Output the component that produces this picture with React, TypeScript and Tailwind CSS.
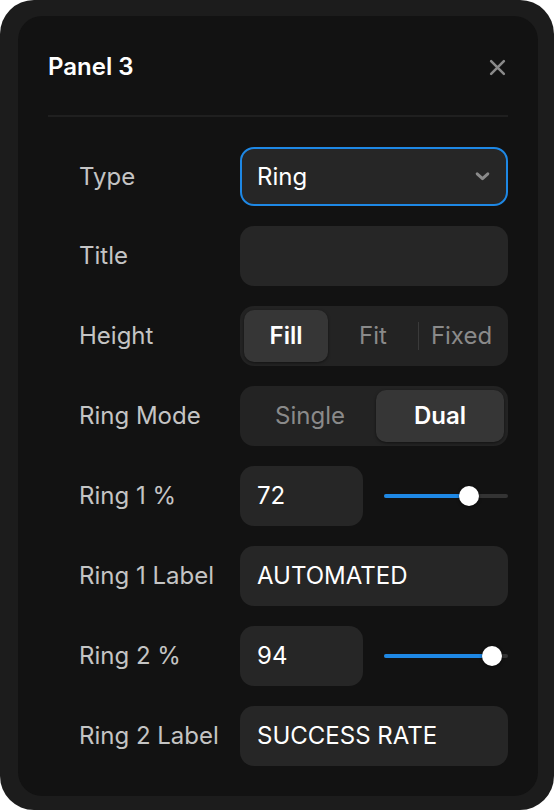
import React, { useState } from 'react';

const font = { fontFamily: 'Inter, "Noto Sans", sans-serif' };

const Label = ({ children }: { children: React.ReactNode }) => (
  <div className="w-[192px] shrink-0 pl-[31px] text-[24px] text-[#c4c4c4]">{children}</div>
);

const Slider = ({ value }: { value: number }) => {
  return (
    <div className="relative ml-[21px] h-5 w-[124px]">
      <div className="absolute left-0 right-0 top-[8px] h-[4px] rounded-full bg-[#333]" />
      <div
        className="absolute left-0 top-[8px] h-[4px] rounded-full bg-[#1e88e5]"
        style={{ width: `${10 + value * 1.04}px` }}
      />
      <div
        className="absolute top-0 h-5 w-5 rounded-full bg-white shadow-[0_1px_3px_rgba(0,0,0,0.6)]"
        style={{ left: `${value * 1.04}px` }}
      />
    </div>
  );
};

const App = () => {
  const [height, setHeight] = useState('Fill');
  const [mode, setMode] = useState('Dual');

  return (
    <div className="w-[554px] h-[810px] bg-white" style={font}>
      <div className="w-full h-full rounded-[34px] bg-[#1c1c1c] pt-[16px] pl-[18px] pr-[16px] pb-[14px]">
        <div className="w-full h-full rounded-[24px] bg-[#121212] px-[30px] pt-[36px]">
          <div className="flex items-center justify-between h-[30px]">
            <h1 className="text-[24px] font-semibold text-white">Panel 3</h1>
            <svg width="17" height="17" viewBox="0 0 16 16" className="mr-[2px]">
              <path d="M2 2L14 14M14 2L2 14" stroke="#8a8a8a" strokeWidth="2.4" strokeLinecap="round" />
            </svg>
          </div>
          <div className="mt-[33px] h-[2px] bg-[#1f1f1f]" />

          <div className="flex flex-col gap-[20px] mt-[30px]">
            <div className="flex items-center">
              <Label>Type</Label>
              <div className="flex-1 h-[59px] rounded-[14px] bg-[#262626] border-2 border-[#1e88e5] flex items-center justify-between pl-[15px] pr-[15px]">
                <span className="text-[24px] text-white">Ring</span>
                <svg width="17" height="11" viewBox="0 0 16 10">
                  <path d="M3 2.5L8 7L13 2.5" stroke="#8a8a8a" strokeWidth="2.8" fill="none" strokeLinecap="round" strokeLinejoin="round" />
                </svg>
              </div>
            </div>

            <div className="flex items-center">
              <Label>Title</Label>
              <div className="flex-1 h-[60px] rounded-[14px] bg-[#262626]" />
            </div>

            <div className="flex items-center">
              <Label>Height</Label>
              <div className="flex-1 h-[60px] rounded-[14px] bg-[#232323] p-[4px] flex items-center">
                {['Fill', 'Fit', 'Fixed'].map((item, i) => (
                  <React.Fragment key={item}>
                    {i === 2 && <div className="w-[1px] h-[28px] bg-[#3a3a3a]" />}
                    <button
                      onClick={() => setHeight(item)}
                      className={`h-full rounded-[10px] text-[24px] ${
                        height === item
                          ? 'bg-[#363636] text-white font-semibold shadow-[0_1px_3px_rgba(0,0,0,0.5)]'
                          : 'text-[#8a8a8a]'
                      } ${i === 0 ? 'w-[84px]' : i === 1 ? 'w-[90px]' : 'flex-1'}`}
                    >
                      {item}
                    </button>
                  </React.Fragment>
                ))}
              </div>
            </div>

            <div className="flex items-center">
              <Label>Ring Mode</Label>
              <div className="flex-1 h-[60px] rounded-[14px] bg-[#232323] p-[4px] flex items-center">
                {['Single', 'Dual'].map((item) => (
                  <button
                    key={item}
                    onClick={() => setMode(item)}
                    className={`h-full rounded-[10px] text-[24px] ${item === 'Single' ? 'w-[132px]' : 'flex-1'} ${
                      mode === item
                        ? 'bg-[#363636] text-white font-semibold shadow-[0_1px_3px_rgba(0,0,0,0.5)]'
                        : 'text-[#8a8a8a]'
                    }`}
                  >
                    {item}
                  </button>
                ))}
              </div>
            </div>

            <div className="flex items-center">
              <Label>Ring 1 %</Label>
              <div className="w-[123px] h-[60px] rounded-[14px] bg-[#262626] flex items-center pl-[17px] text-[24px] text-white">
                72
              </div>
              <Slider value={72} />
            </div>

            <div className="flex items-center">
              <Label>Ring 1 Label</Label>
              <div className="flex-1 h-[60px] rounded-[14px] bg-[#262626] flex items-center pl-[17px] text-[24px] text-white">
                AUTOMATED
              </div>
            </div>

            <div className="flex items-center">
              <Label>Ring 2 %</Label>
              <div className="w-[123px] h-[60px] rounded-[14px] bg-[#262626] flex items-center pl-[17px] text-[24px] text-white">
                94
              </div>
              <Slider value={94} />
            </div>

            <div className="flex items-center">
              <Label>Ring 2 Label</Label>
              <div className="flex-1 h-[60px] rounded-[14px] bg-[#262626] flex items-center pl-[17px] text-[24px] text-white">
                SUCCESS RATE
              </div>
            </div>
          </div>
        </div>
      </div>
    </div>
  );
};

export default App;
